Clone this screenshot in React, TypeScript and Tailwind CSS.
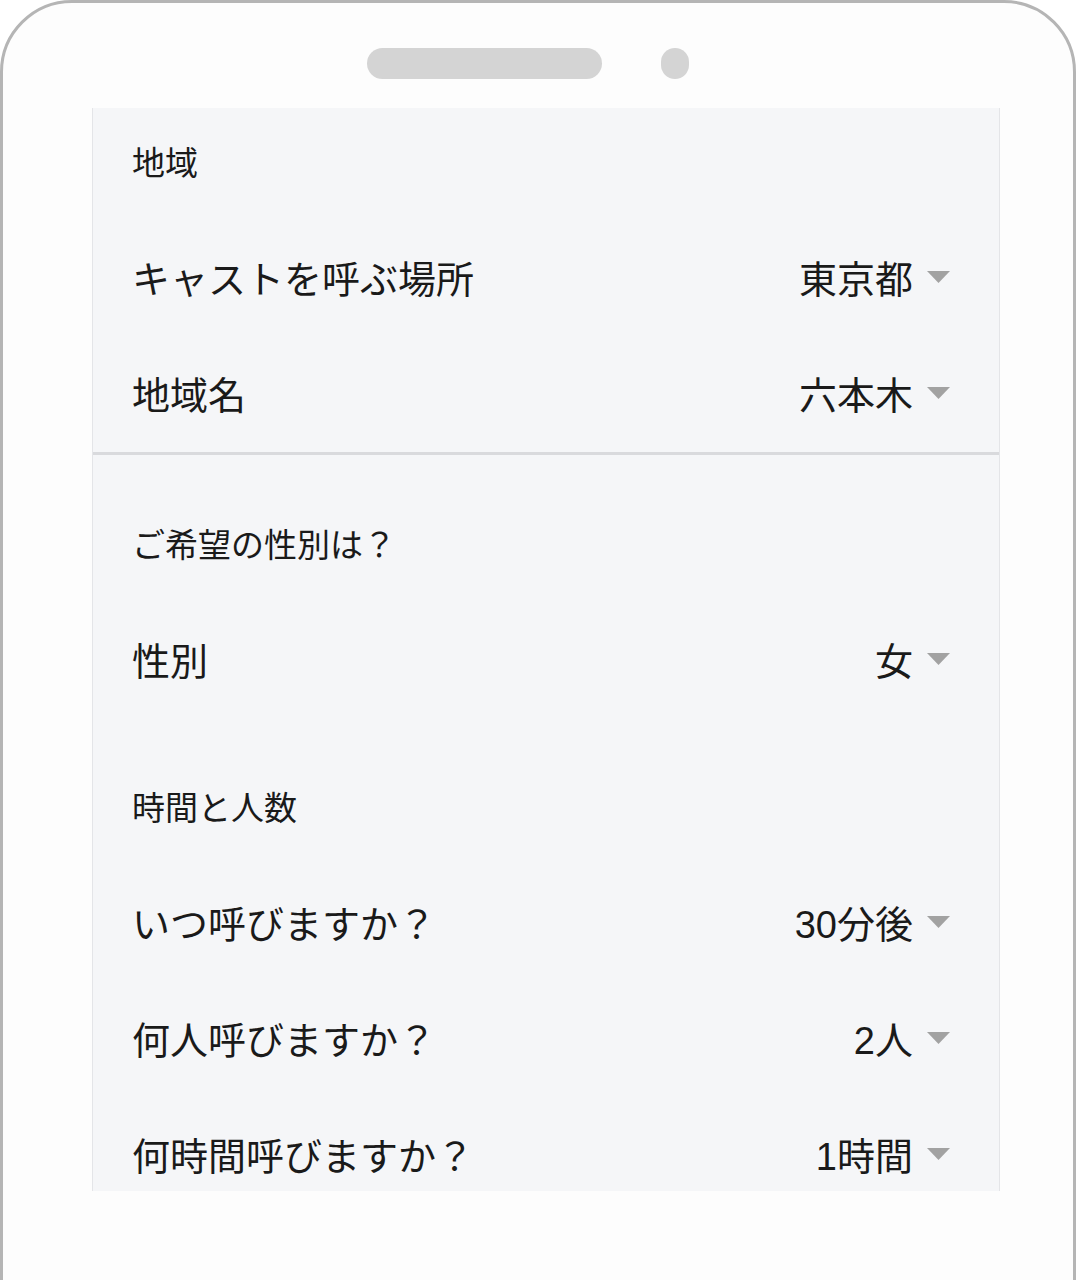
const rows1 = [
  { label: "キャストを呼ぶ場所", value: "東京都" },
  { label: "地域名", value: "六本木" },
];

const rows3 = [
  { label: "いつ呼びますか？", value: "30分後" },
  { label: "何人呼びますか？", value: "2人" },
  { label: "何時間呼びますか？", value: "1時間" },
];

const Caret = () => (
  <svg width="23" height="12" viewBox="0 0 23 12" className="ml-[14px] mb-[7px] shrink-0">
    <path d="M0 0 H23 L11.5 12 Z" fill="#a2a2a2" />
  </svg>
);

const SelectRow = ({ label, value }: { label: string; value: string }) => (
  <div className="h-[116px] flex items-center justify-between pl-[39px] pr-[49px] pt-[4px]">
    <span className="text-[38px] leading-[40px] text-[#1a1a1a]">{label}</span>
    <div className="flex items-center">
      <span className="text-[38px] leading-[40px] text-[#1a1a1a]">{value}</span>
      <Caret />
    </div>
  </div>
);

const SectionTitle = ({ title, top }: { title: string; top: string }) => (
  <div className={`${top} pb-[40px] pl-[39px]`}>
    <p className="text-[33px] leading-[32px] text-[#1a1a1a]">{title}</p>
  </div>
);

export default function App() {
  return (
    <div
      className="w-[1076px] h-[1280px] bg-white overflow-hidden"
      style={{ fontFamily: '"Liberation Sans", "Noto Sans CJK JP", sans-serif' }}
    >
      <div className="h-[1320px] border-[3px] border-[#b5b5b5] rounded-t-[72px] bg-[#fdfdfd]">
        {/* speaker + camera */}
        <div className="h-[105px] pt-[45px] flex justify-center pr-[20px]">
          <div className="flex items-start gap-[59px]">
            <div className="w-[235px] h-[31px] rounded-full bg-[#d4d4d4]" />
            <div className="w-[28px] h-[31px] rounded-full bg-[#d4d4d4]" />
          </div>
        </div>

        <div className="ml-[89px] w-[908px] h-[1083px] overflow-hidden bg-[#f5f6f8] border-x border-[#e4e5e8]">
          <div className="border-b-[3px] border-[#d9dadd]">
            <SectionTitle title="地域" top="pt-[40px]" />
            {rows1.map((r) => (
              <SelectRow key={r.label} {...r} />
            ))}
          </div>

          <div>
            <SectionTitle title="ご希望の性別は？" top="pt-[75px]" />
            <SelectRow label="性別" value="女" />
          </div>

          <div>
            <SectionTitle title="時間と人数" top="pt-[75px]" />
            {rows3.map((r) => (
              <SelectRow key={r.label} {...r} />
            ))}
          </div>
        </div>
      </div>
    </div>
  );
}
